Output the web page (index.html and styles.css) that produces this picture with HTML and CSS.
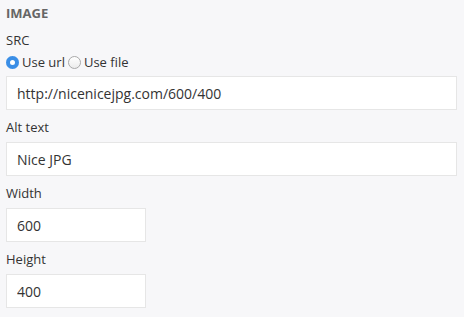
FILE: index.html
```html
<!DOCTYPE html>
<html lang="en">
<head>
   <meta charset="UTF-8">
   <title>Image</title>
   <link rel="stylesheet" href="styles.css">
</head>
<body>
<main class="panel">
   <h2 class="panel-title">IMAGE</h2>
   <form class="fields">
      <label class="field-label">SRC</label>
      <div class="radios">
         <label class="radio"><input type="radio" name="src" checked><span class="dot"></span>Use url</label>
         <label class="radio"><input type="radio" name="src"><span class="dot"></span>Use file</label>
      </div>
      <input class="text-input" type="text" value="http://nicenicejpg.com/600/400">

      <label class="field-label">Alt text</label>
      <input class="text-input" type="text" value="Nice JPG">

      <label class="field-label">Width</label>
      <input class="text-input small" type="text" value="600">

      <label class="field-label">Height</label>
      <input class="text-input small" type="text" value="400">
   </form>
</main>
</body>
</html>
```

FILE: styles.css
```css
body {
   font-family: "Open Sans", Arial, sans-serif;
   margin: 0;
   padding: 0;
   background-color: #f7f7f9;
   color: #333;
}
.panel {
   padding: 4px 7px 0 6px;
}
.panel-title {
   margin: 0;
   font-size: 13px;
   font-weight: 700;
   color: #666;
   line-height: 16px;
   padding-top: 1px;
}
.fields {
   display: flex;
   flex-direction: column;
   align-items: flex-start;
}
.field-label {
   font-size: 13px;
   line-height: 18px;
   margin-top: 8px;
   color: #333;
}
.panel-title + .fields .field-label:first-child {
   margin-top: 10px;
}
.radios {
   display: flex;
   gap: 3px;
   height: 18px;
   margin-top: 4px;
   margin-bottom: 5px;
}
.radio {
   display: flex;
   align-items: center;
   gap: 3px;
   font-size: 13px;
}
.radio input {
   display: none;
}
.dot {
   width: 13px;
   height: 13px;
   border-radius: 50%;
   border: 1px solid #a9a9a9;
   background: linear-gradient(#fff, #ececec);
   box-sizing: border-box;
}
.radio input:checked + .dot {
   border: none;
   background: #3a8ee6;
   box-shadow: inset 0 0 0 4px #3a8ee6, inset 0 0 0 7px #fff;
}
.text-input {
   width: 451px;
   height: 34px;
   box-sizing: border-box;
   border: 1px solid #e6e6e6;
   background: #fff;
   font-family: inherit;
   font-size: 14px;
   color: #333;
   padding: 0 10px;
   margin-top: 6px;
   outline: none;
}
.radios + .text-input {
   margin-top: 0;
}
.small {
   width: 140px;
}
```
